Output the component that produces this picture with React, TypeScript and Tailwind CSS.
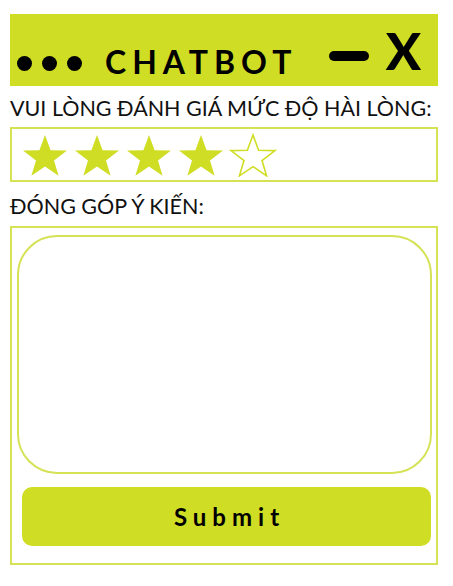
import React from "react";

const Star = ({ filled }: { filled: boolean }) => (
  <svg width="50" height="44" viewBox="0 0 50 44" className="block">
    <polygon
      points="25,2 30.6,17.2 47,17.6 34,27.6 38.6,42.8 25,33.6 11.4,42.8 16,27.6 3,17.6 19.4,17.2"
      fill={filled ? "#d0dd25" : "none"}
      stroke="#d0dd25"
      strokeWidth={filled ? 0 : 1.6}
      strokeLinejoin="miter"
    />
  </svg>
);

export default function App() {
  return (
    <div className="w-[453px] h-[586px] bg-white" style={{ fontFamily: "Lato, 'Open Sans', sans-serif" }}>
      <div className="pt-[14px] pl-[10px] w-[438px]">
        <div className="h-[72px] bg-[#d0dd25] flex items-center pl-[7px] pr-[17px]">
          <div className="flex gap-[10px] mt-[26px]">
            <span className="w-[15px] h-[15px] rounded-full bg-black" />
            <span className="w-[15px] h-[15px] rounded-full bg-black" />
            <span className="w-[15px] h-[15px] rounded-full bg-black" />
          </div>
          <span className="ml-[23px] mt-[23px] text-[32px] font-bold tracking-[6px] text-black leading-none">CHATBOT</span>
          <span className="ml-auto w-[40px] h-[10px] rounded-full bg-black mt-[12px]" />
          <span className="ml-[17px] text-[52px] font-black leading-none text-black mt-[0px]">X</span>
        </div>
        <div className="mt-[9px] text-[21.5px] leading-[26px] text-[#111] whitespace-nowrap">VUI LÒNG ĐÁNH GIÁ MỨC ĐỘ HÀI LÒNG:</div>
        <div className="mt-[6px] h-[55px] border-2 border-[#d5e256] flex items-center pl-[8px] gap-[2px]">
          <Star filled />
          <Star filled />
          <Star filled />
          <Star filled />
          <Star filled={false} />
        </div>
        <div className="mt-[11px] text-[21.5px] leading-[26px] text-[#111] whitespace-nowrap">ĐÓNG GÓP Ý KIẾN:</div>
        <div className="mt-[7px] h-[339px] border-2 border-[#d5e256] pt-[7px] pl-[5px] pr-[4px]">
          <div className="h-[239px] border-2 border-[#d5e256] rounded-[40px]" />
          <button className="mt-[13px] ml-[5px] w-[409px] h-[59px] rounded-[10px] bg-[#d0dd25] text-[24px] font-bold tracking-[6px] text-black flex items-center justify-center pl-[6px]">
            Submit
          </button>
        </div>
      </div>
    </div>
  );
}
